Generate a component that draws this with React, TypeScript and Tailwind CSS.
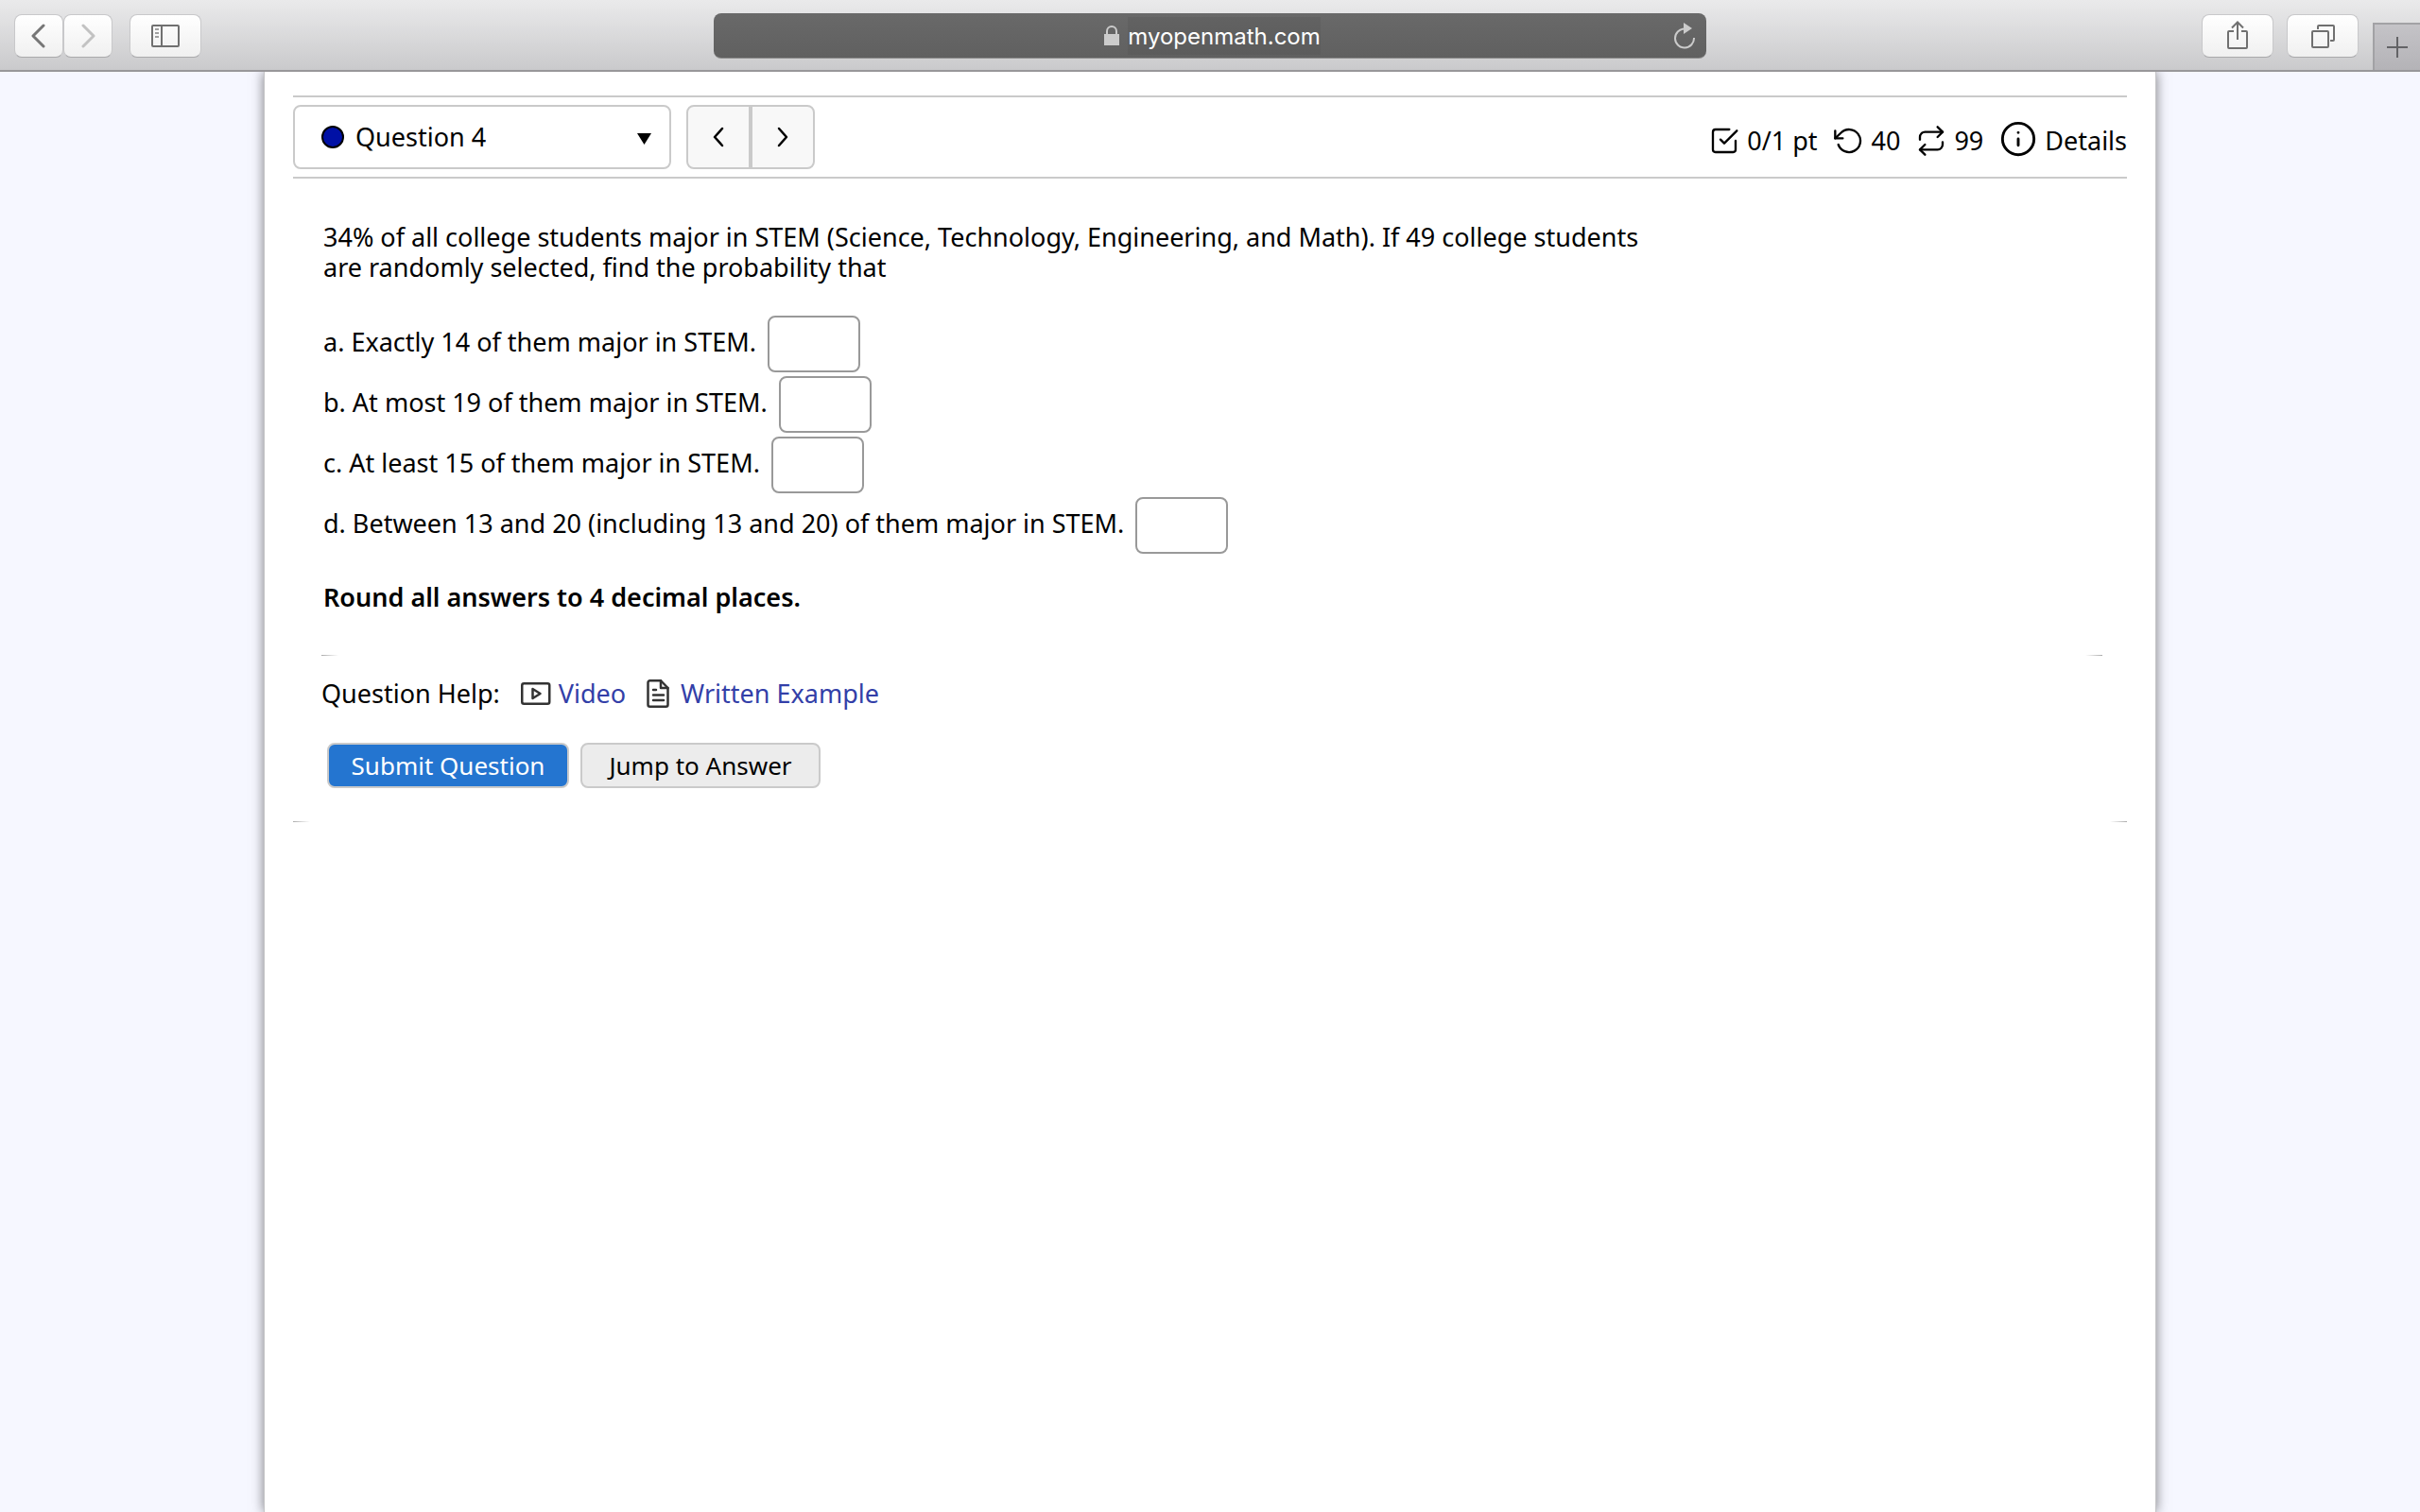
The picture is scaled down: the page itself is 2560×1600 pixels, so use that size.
import { useState } from 'react';
import type { ReactNode } from 'react';

const parts = [
  { id: 'a', text: 'a. Exactly 14 of them major in STEM.' },
  { id: 'b', text: 'b. At most 19 of them major in STEM.' },
  { id: 'c', text: 'c. At least 15 of them major in STEM.' },
  { id: 'd', text: 'd. Between 13 and 20 (including 13 and 20) of them major in STEM.' },
];

const toolButton =
  'h-[46px] rounded-lg border border-[#c8c8ca] border-b-[#a9a9ab] bg-linear-to-b from-white to-[#f0f0f0] flex items-center justify-center';

function Feather({ children, className }: { children: ReactNode; className: string }) {
  return (
    <svg
      viewBox="0 0 24 24"
      fill="none"
      stroke="currentColor"
      strokeWidth="1.75"
      strokeLinecap="round"
      strokeLinejoin="round"
      className={className}
      aria-hidden="true"
    >
      {children}
    </svg>
  );
}

function BrowserBar() {
  return (
    <header className="grid grid-cols-[1fr_minmax(0,1050px)_1fr] h-[76px] border-b-2 border-[#98979a] bg-linear-to-b from-[#eaeaeb] to-[#cacacc] font-['Inter',sans-serif]">
      <div className="flex items-center pl-[15px] pt-[2px]">
        <button aria-label="Back" className={`${toolButton} w-[52px]`}>
          <svg width="16" height="26" viewBox="0 0 16 26" fill="none" stroke="#767676" strokeWidth="3" strokeLinecap="round" strokeLinejoin="round">
            <path d="M13 2 2 13l11 11" />
          </svg>
        </button>
        <button aria-label="Forward" className={`${toolButton} w-[52px]`}>
          <svg width="16" height="26" viewBox="0 0 16 26" fill="none" stroke="#c2c2c2" strokeWidth="3" strokeLinecap="round" strokeLinejoin="round">
            <path d="m3 2 11 11L3 24" />
          </svg>
        </button>
        <button aria-label="Show sidebar" className={`${toolButton} w-[76px] ml-[18px]`}>
          <svg width="30" height="24" viewBox="0 0 30 24" fill="none" stroke="#707070" strokeWidth="2">
            <rect x="1" y="1" width="28" height="22" rx="1" />
            <path d="M11 1v22" />
            <path d="M4 5h4M4 9h4M4 13h4" stroke="#a0a0a0" />
          </svg>
        </button>
      </div>

      <div className="flex items-center my-auto h-12 mt-[14px] rounded-lg bg-linear-to-b from-[#696969] to-[#606060] border-b border-[#8a8a8a]">
        <div className="flex-1 flex items-center justify-center gap-2 pl-10">
          <svg width="18" height="22" viewBox="0 0 18 22" fill="none" aria-hidden="true">
            <rect x="1" y="9" width="16" height="12" fill="#cbcbcb" />
            <path d="M4 9V6a5 5 0 0 1 10 0v3" stroke="#cbcbcb" strokeWidth="2" />
          </svg>
          <input
            aria-label="Address"
            defaultValue="myopenmath.com"
            className="field-sizing-content h-10 pt-[2px] text-2xl text-white bg-black/5 outline-none"
          />
        </div>
        <button aria-label="Reload" className="w-9 pl-px">
          <svg width="24" height="28" viewBox="0 0 24 28">
            <path d="M12 6.500a10 10 0 1 0 10 9.500" fill="none" stroke="#cbcbcb" strokeWidth="2" />
            <path d="M11 0v12l9-6z" fill="#cbcbcb" />
          </svg>
        </button>
      </div>

      <div className="flex items-center justify-end">
        <button aria-label="Share" className={`${toolButton} w-[76px] mt-[2px]`}>
          <svg width="24" height="32" viewBox="0 0 24 32" fill="none" stroke="#707070" strokeWidth="2" className="mb-[2px]">
            <path d="M8 12H3a1 1 0 0 0-1 1v16a1 1 0 0 0 1 1h18a1 1 0 0 0 1-1V13a1 1 0 0 0-1-1h-5" />
            <path d="M12 21V3M6 8.500l6-6 6 6" />
          </svg>
        </button>
        <button aria-label="Show all tabs" className={`${toolButton} w-[76px] mt-[2px] ml-[14px]`}>
          <svg width="26" height="26" viewBox="0 0 26 26" fill="none" stroke="#707070" strokeWidth="2">
            <rect x="2" y="8" width="17" height="17" rx="1" />
            <path d="M8 6V3a1 1 0 0 1 1-1h15a1 1 0 0 1 1 1v14a1 1 0 0 1-1 1h-3" />
          </svg>
        </button>
        <button
          aria-label="New tab"
          className="self-end w-[50px] h-[50px] ml-[15px] border-t-2 border-l-2 border-[#a2a2a5] bg-linear-to-b from-[#c4c3c7] to-[#b4b3b7] flex items-center justify-center"
        >
          <svg width="22" height="22" viewBox="0 0 22 22" stroke="#636366" strokeWidth="2">
            <path d="M11 0v22M0 11h22" />
          </svg>
        </button>
      </div>
    </header>
  );
}

function QuestionNav() {
  return (
    <div className="flex items-center justify-between border-y-2 border-[#cacaca] py-2">
      <div className="flex gap-4">
        <div className="flex items-center w-[400px] h-[68px] border-2 border-[#cacaca] rounded-lg pl-7 pr-[19px]">
          <span className="size-6 rounded-full border-2 border-black bg-[#0010a5]" />
          <select aria-label="Question" className="flex-1 appearance-none ml-3 bg-transparent outline-none">
            <option>Question 4</option>
          </select>
          <svg width="15" height="12" viewBox="0 0 15 12" className="mt-1" aria-hidden="true">
            <path d="M0 0h15L7.500 12z" />
          </svg>
        </div>
        <div className="flex">
          <button aria-label="Previous question" className="size-[68px] border-2 border-[#cacaca] rounded-l-lg bg-[#f8f8f8] flex items-center justify-center">
            <svg width="12" height="22" viewBox="0 0 12 22" fill="none" stroke="black" strokeWidth="2.500" strokeLinecap="round" strokeLinejoin="round">
              <path d="m10 2-8 9 8 9" />
            </svg>
          </button>
          <button aria-label="Next question" className="size-[68px] border-2 border-[#cacaca] rounded-r-lg bg-[#f8f8f8] flex items-center justify-center">
            <svg width="12" height="22" viewBox="0 0 12 22" fill="none" stroke="black" strokeWidth="2.500" strokeLinecap="round" strokeLinejoin="round">
              <path d="m2 2 8 9-8 9" />
            </svg>
          </button>
        </div>
      </div>

      <div className="flex items-center gap-[17px] pt-2">
        <span className="flex items-center gap-2">
          <Feather className="size-8">
            <path d="m9 11 3 3L22 4" />
            <path d="M21 12v7a2 2 0 0 1-2 2H5a2 2 0 0 1-2-2V5a2 2 0 0 1 2-2h11" />
          </Feather>
          0/1 pt
        </span>
        <span className="flex items-center gap-2">
          <Feather className="size-8">
            <path d="M1 4v6h6" />
            <path d="M3.510 15a9 9 0 1 0 2.130-9.360L1 10" />
          </Feather>
          40
        </span>
        <span className="flex items-center gap-2">
          <Feather className="size-8">
            <path d="m17 1 4 4-4 4" />
            <path d="M3 11V9a4 4 0 0 1 4-4h14" />
            <path d="m7 23-4-4 4-4" />
            <path d="M21 13v2a4 4 0 0 1-4 4H3" />
          </Feather>
          99
        </span>
        <button className="flex items-center gap-2">
          <Feather className="size-10 mb-1">
            <circle cx="12" cy="12" r="10" />
            <path d="M12 16v-4M12 8h.010" />
          </Feather>
          Details
        </button>
      </div>
    </div>
  );
}

// only the two ends of the rule are visible
function FadedRule() {
  return (
    <div className="flex justify-between h-px">
      <span className="w-[18px] bg-linear-to-r from-[#aaaaaa] to-transparent" />
      <span className="w-[18px] bg-linear-to-l from-[#aaaaaa] to-transparent" />
    </div>
  );
}

export default function App() {
  const [answers, setAnswers] = useState<Record<string, string>>({});

  return (
    <div className="min-h-screen flex flex-col bg-[#f6f7ff] text-black">
      <BrowserBar />
      <main className="flex-1 w-full max-w-[2002px] mx-auto px-[30px] pt-[25px] bg-white border-x border-[#c4c4c6] shadow-[0_0_12px_rgba(0,0,0,0.5)] [clip-path:inset(0_-20px)] font-['Noto_Sans',sans-serif] text-[27px] leading-8">
        <QuestionNav />

        <form onSubmit={e => e.preventDefault()}>
          <div className="px-[30px]">
            <div className="pl-[2px]">
              <p className="mt-[46px] max-w-[1400px]">
                34% of all college students major in STEM (Science, Technology, Engineering, and Math). If 49 college
                students are randomly selected, find the probability that
              </p>

              <div className="mt-[33px]">
                {parts.map(part => (
                  <label key={part.id} className="flex items-center gap-3 h-16">
                    <span className="pb-1">{part.text}</span>
                    <input
                      type="text"
                      value={answers[part.id] ?? ''}
                      onChange={e => setAnswers({ ...answers, [part.id]: e.target.value })}
                      className="w-[98px] h-[60px] px-2 border-2 border-[#999999] rounded-lg bg-white"
                    />
                  </label>
                ))}
              </div>

              <p className="mt-7 mb-[45px] font-semibold">Round all answers to 4 decimal places.</p>
            </div>

            <div className="-mr-1">
              <FadedRule />
            </div>

            <div className="flex items-center mt-6">
              Question Help:
              <a href="#video" className="flex items-center gap-2 ml-[22px] text-[#333fa8]">
                <svg width="32" height="24" viewBox="0 0 32 24" fill="none" stroke="#333333" strokeWidth="2.500" strokeLinejoin="round">
                  <rect x="1.250" y="1.250" width="29" height="21.500" rx="2" />
                  <path d="M12.500 7v10l8-5z" />
                </svg>
                Video
              </a>
              <a href="#example" className="flex items-center gap-3 ml-[22px] text-[#333fa8]">
                <svg width="24" height="30" viewBox="0 0 24 30" fill="none" stroke="#333333" strokeWidth="2.500" strokeLinejoin="round" strokeLinecap="round">
                  <path d="M15 1.250H3.500a2 2 0 0 0-2 2v23.500a2 2 0 0 0 2 2h17a2 2 0 0 0 2-2V9z" />
                  <path d="M15 1.250V9h7.500M7 11h3M7 16.500h11M7 22h11" />
                </svg>
                Written Example
              </a>
            </div>

            <div className="flex gap-3 mt-9 mb-[35px] ml-[6px] text-[26px]">
              <button type="submit" className="w-64 h-12 border-2 border-[#cacaca] rounded-lg bg-[#2475d0] text-white">
                Submit Question
              </button>
              <button type="button" className="w-[254px] h-12 border-2 border-[#cacaca] rounded-lg bg-[#ececec]">
                Jump to Answer
              </button>
            </div>
          </div>
          <FadedRule />
        </form>
      </main>
    </div>
  );
}
